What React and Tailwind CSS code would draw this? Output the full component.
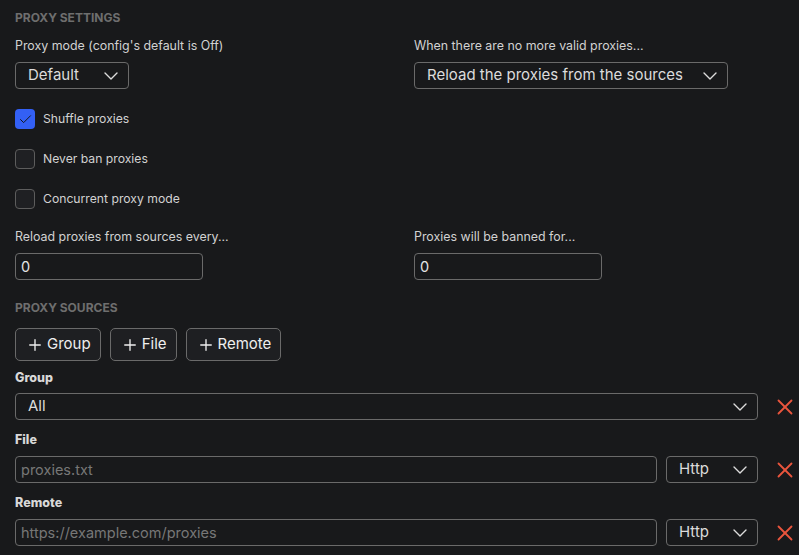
import { Check, ChevronDown, Plus, X } from 'lucide-react'

const font = { fontFamily: 'Inter, "Noto Sans", sans-serif' }

function Select({ value, className = '' }) {
  return (
    <div
      className={`flex h-[27px] shrink-0 items-center justify-between rounded-[4px] border border-[#6a6a6a] pl-3 pr-[5px] text-[15px] text-[#dcdcdc] ${className}`}
    >
      <span>{value}</span>
      <ChevronDown size={24} strokeWidth={1.4} className="text-[#dcdcdc]" />
    </div>
  )
}

function TextInput({ value, placeholder, className = '' }) {
  return (
    <div
      className={`flex h-[27px] shrink-0 items-center rounded-[4px] border border-[#6a6a6a] px-[5px] text-[14.5px] ${className}`}
    >
      {value ? <span className="text-[#e4e4e4]">{value}</span> : <span className="text-[#777]">{placeholder}</span>}
    </div>
  )
}

function CheckRow({ label, checked }) {
  return (
    <div className="flex h-5 items-center gap-2">
      <div
        className={`flex h-5 w-5 items-center justify-center rounded-[4px] ${
          checked ? 'bg-[#3360f5]' : 'border border-[#5d5d5d] bg-[#1f2023]'
        }`}
      >
        {checked && <Check size={15} strokeWidth={1.6} className="text-[#14161c]" />}
      </div>
      <span className="text-[12.2px] text-[#d2d2d2]">{label}</span>
    </div>
  )
}

function Remove() {
  return (
    <div className="ml-[14px] flex w-[26px] shrink-0 justify-center">
      <X size={26} strokeWidth={1.7} className="text-[#e9553d]" />
    </div>
  )
}

function AddButton({ label }) {
  return (
    <button className="flex h-[33px] items-center gap-[3px] rounded-[5px] border border-[#6a6a6a] bg-[#1e1f22] pl-[10px] pr-[9px] text-[15px] text-[#eeeeee]">
      <Plus size={18} strokeWidth={1.8} />
      {label}
    </button>
  )
}

function Label({ children }) {
  return <p className="text-[12.4px] leading-[16px] text-[#d2d2d2]">{children}</p>
}

function SourceLabel({ children }) {
  return <p className="text-[12.5px] font-extrabold leading-[16px] text-[#d8d8d8]">{children}</p>
}

export default function App() {
  return (
    <div style={font} className="h-[555px] w-[799px] overflow-hidden bg-[#18191b] pl-[15px] pt-[11px]">
      <h2 className="text-[12px] font-bold leading-[14px] text-[#6e6e6e]">PROXY SETTINGS</h2>

      <div className="mt-[13px] grid grid-cols-[399px_1fr]">
        <div>
          <Label>Proxy mode (config's default is Off)</Label>
          <Select value="Default" className="mt-[8px] w-[114px]" />
        </div>
        <div>
          <Label>When there are no more valid proxies...</Label>
          <Select value="Reload the proxies from the sources" className="mt-[8px] w-[314px]" />
        </div>
      </div>

      <div className="mt-[20px] flex flex-col gap-5">
        <CheckRow label="Shuffle proxies" checked />
        <CheckRow label="Never ban proxies" />
        <CheckRow label="Concurrent proxy mode" />
      </div>

      <div className="mt-[20px] grid grid-cols-[399px_1fr]">
        <div>
          <Label>Reload proxies from sources every...</Label>
          <TextInput value="0" className="mt-[8px] w-[188px]" />
        </div>
        <div>
          <Label>Proxies will be banned for...</Label>
          <TextInput value="0" className="mt-[8px] w-[188px]" />
        </div>
      </div>

      <h2 className="mt-[21px] text-[12px] font-bold leading-[14px] text-[#6e6e6e]">PROXY SOURCES</h2>

      <div className="mt-[13px] flex gap-[9px]">
        <AddButton label="Group" />
        <AddButton label="File" />
        <AddButton label="Remote" />
      </div>

      <div className="mt-[9px]">
        <SourceLabel>Group</SourceLabel>
        <div className="mt-[7px] flex items-center">
          <Select value="All" className="w-[743px]" />
          <Remove />
        </div>
      </div>

      <div className="mt-[12px]">
        <SourceLabel>File</SourceLabel>
        <div className="mt-[8px] flex items-center">
          <TextInput placeholder="proxies.txt" className="w-[642px]" />
          <Select value="Http" className="ml-[9px] w-[92px]" />
          <Remove />
        </div>
      </div>

      <div className="mt-[12px]">
        <SourceLabel>Remote</SourceLabel>
        <div className="mt-[8px] flex items-center">
          <TextInput placeholder="https://example.com/proxies" className="w-[642px]" />
          <Select value="Http" className="ml-[9px] w-[92px]" />
          <Remove />
        </div>
      </div>
    </div>
  )
}
